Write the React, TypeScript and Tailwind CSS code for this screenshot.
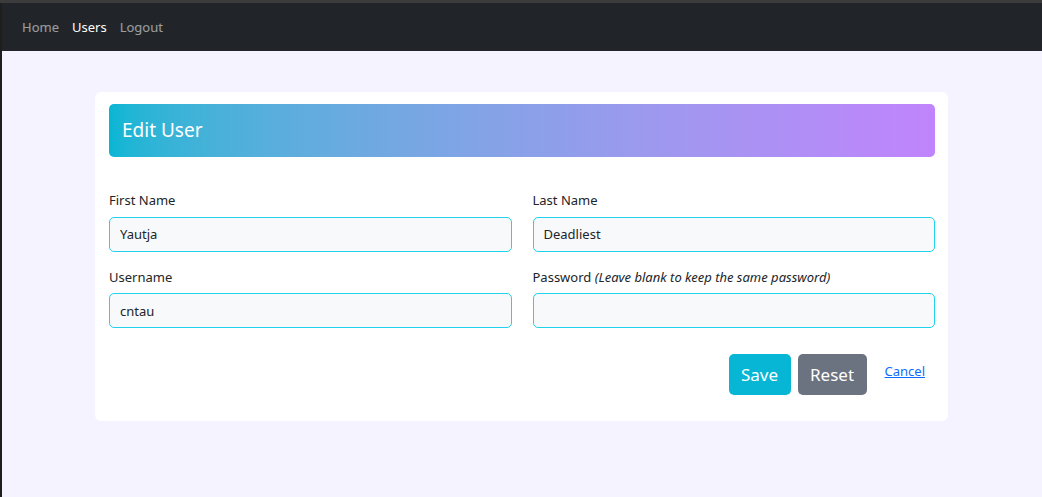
import { useState } from "react";

const font = { fontFamily: '"Noto Sans", "Open Sans", sans-serif' };

export default function App() {
  const [form, setForm] = useState({
    firstName: "Yautja",
    lastName: "Deadliest",
    username: "cntau",
    password: "",
  });

  const inputCls =
    "h-[35px] w-full rounded-[5px] border border-[#22d3ee] bg-[#f8f9fa] px-[10px] text-[13px] text-[#212529] outline-none";

  return (
    <div
      className="flex min-h-[497px] flex-col border-t-[3px] border-[#3c3c3c] bg-[#1e1e1e]"
      style={font}
    >
      <div className="flex flex-1 flex-col ml-[2px]">
        <nav className="flex h-[48px] items-center gap-[13px] bg-[#212529] px-[20px] pt-[2px] text-[13px]">
          <a href="#" className="text-white/55">Home</a>
          <a href="#" className="text-white">Users</a>
          <a href="#" className="text-white/55">Logout</a>
        </nav>

        <main className="flex-1 bg-[#f5f3ff] pt-[41px]">
          <div className="ml-[93px] w-[853px] rounded-[6px] bg-white pl-[14px] pr-[13px] pt-[12px] pb-[26px]">
            <div className="flex h-[53px] items-center rounded-[5px] bg-gradient-to-r from-[#06b6d4] to-[#c084fc] px-[13px]">
              <h1 className="text-[19px] text-white">Edit User</h1>
            </div>

            <form className="mt-[34px] grid grid-cols-2 gap-x-[21px] gap-y-[16px]">
              <label className="flex flex-col gap-[6px]">
                <span className="text-[13px] text-[#212529]">First Name</span>
                <input
                  className={inputCls}
                  value={form.firstName}
                  onChange={(e) => setForm({ ...form, firstName: e.target.value })}
                />
              </label>
              <label className="flex flex-col gap-[6px]">
                <span className="text-[13px] text-[#212529]">Last Name</span>
                <input
                  className={inputCls}
                  value={form.lastName}
                  onChange={(e) => setForm({ ...form, lastName: e.target.value })}
                />
              </label>
              <label className="flex flex-col gap-[6px]">
                <span className="text-[13px] text-[#212529]">Username</span>
                <input
                  className={inputCls}
                  value={form.username}
                  onChange={(e) => setForm({ ...form, username: e.target.value })}
                />
              </label>
              <label className="flex flex-col gap-[6px]">
                <span className="text-[13px] text-[#212529]">
                  Password <i>(Leave blank to keep the same password)</i>
                </span>
                <input
                  type="password"
                  className={inputCls}
                  value={form.password}
                  onChange={(e) => setForm({ ...form, password: e.target.value })}
                />
              </label>

              <div className="col-span-2 mt-[10px] flex items-start justify-end gap-[7px] pr-[10px]">
                <button type="button" className="h-[41px] w-[62px] rounded-[5px] bg-[#06b6d4] text-[17px] text-white">
                  Save
                </button>
                <button type="button" className="h-[41px] w-[69px] rounded-[5px] bg-[#6b7280] text-[17px] text-white">
                  Reset
                </button>
                <a href="#" className="ml-[11px] mt-[8px] text-[13px] text-[#0d6efd] underline">
                  Cancel
                </a>
              </div>
            </form>
          </div>
        </main>
      </div>
    </div>
  );
}
